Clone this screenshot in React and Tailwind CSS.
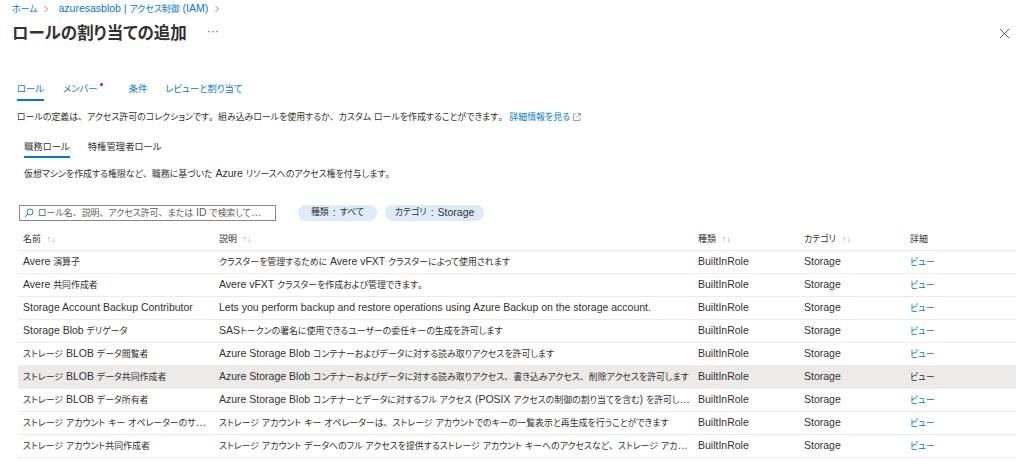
import React from "react";

const rows = [
  { name: "Avere 演算子", desc: "クラスターを管理するために Avere vFXT クラスターによって使用されます" },
  { name: "Avere 共同作成者", desc: "Avere vFXT クラスターを作成および管理できます。" },
  { name: "Storage Account Backup Contributor", desc: "Lets you perform backup and restore operations using Azure Backup on the storage account." },
  { name: "Storage Blob デリゲータ", desc: "SASトークンの署名に使用できるユーザーの委任キーの生成を許可します" },
  { name: "ストレージ BLOB データ閲覧者", desc: "Azure Storage Blob コンテナーおよびデータに対する読み取りアクセスを許可します" },
  { name: "ストレージ BLOB データ共同作成者", desc: "Azure Storage Blob コンテナーおよびデータに対する読み取りアクセス、書き込みアクセス、削除アクセスを許可します", selected: true },
  { name: "ストレージ BLOB データ所有者", desc: "Azure Storage Blob コンテナーとデータに対するフル アクセス (POSIX アクセスの制御の割り当てを含む) を許可します。" },
  { name: "ストレージ アカウント キー オペレーターのサービス ロール", desc: "ストレージ アカウント キー オペレーターは、ストレージ アカウントでのキーの一覧表示と再生成を行うことができます" },
  { name: "ストレージ アカウント共同作成者", desc: "ストレージ アカウント データへのフル アクセスを提供するストレージ アカウント キーへのアクセスなど、ストレージ アカウントを管理できます。" },
];

// japanese runs are set a bit smaller and proportional so they keep the narrow look
// of the screenshot; 、 and 。 keep their full width
function J({ children }) {
  const parts = String(children).split(/([\u3000-\u30ff\u3400-\u9fff\uff00-\uffef]+)/);
  return parts.map((p, i) => {
    if (i % 2 === 0) return p;
    return p.split(/([、。])/).map((q, k) =>
      k % 2 === 1 ? (
        <span key={i + "-" + k} className="text-[0.85em]">{q}</span>
      ) : q ? (
        <span key={i + "-" + k} className="text-[0.85em] [font-feature-settings:'palt']">{q}</span>
      ) : null
    );
  });
}

function SortArrows() {
  return <span className="ml-[6px] text-[9px] text-[#a19f9d]">↑↓</span>;
}

function Chevron() {
  return (
    <svg width="6" height="8" viewBox="0 0 6 8" className="mx-[6px]">
      <path d="M1.5 1L4.5 4L1.5 7" fill="none" stroke="#8a8886" strokeWidth="0.9" />
    </svg>
  );
}

function App() {
  const cols = "grid grid-cols-[196px_484px_106px_106px_1fr]";
  return (
    <div className="w-[1024px] h-[461px] overflow-hidden bg-white text-[#323130] [font-family:'Liberation_Sans','Noto_Sans_CJK_JP',sans-serif] text-[10.5px]">
      <div className="h-[18px] pl-[12px] flex items-center text-[#0078d4]">
        <span><J>ホーム</J></span>
        <Chevron />
        <span className="ml-[3px]"><J>azuresasblob | アクセス制御 (IAM)</J></span>
        <Chevron />
      </div>
      <div className="h-[30px] pl-[12px] pr-[14px] flex items-center">
        <h1 className="text-[16.5px] font-semibold [font-feature-settings:'palt']">ロールの割り当ての追加</h1>
        <span className="ml-[20px] text-[12px] text-[#605e5c] -mt-[4px]">···</span>
        <svg className="ml-auto" width="11" height="11" viewBox="0 0 11 11">
          <path d="M1 1L10 10M10 1L1 10" stroke="#605e5c" strokeWidth="1" />
        </svg>
      </div>

      <div className="mt-[30px] pl-[17px] flex h-[23px] text-[#0078d4] text-[11px]">
        <div className="relative flex items-center">
          <J>ロール</J>
          <span className="absolute left-0 right-0 bottom-0 h-[2px] bg-[#0078d4]" />
        </div>
        <div className="relative flex items-center ml-[19px]">
          <J>メンバー</J>
          <span className="absolute -right-[5px] top-[5px] w-[3px] h-[3px] rounded-full bg-[#e81123]" />
        </div>
        <div className="flex items-center ml-[31px]"><J>条件</J></div>
        <div className="flex items-center ml-[18px]"><J>レビューと割り当て</J></div>
      </div>

      <div className="mt-[8px] pl-[17px] h-[16px] flex items-center">
        <span>
          <J>ロールの定義は、アクセス許可のコレクションです。組み込みロールを使用するか、カスタム ロールを作成することができます。</J>
        </span>
        <span className="ml-[2px] text-[#0078d4]"><J>詳細情報を見る</J></span>
        <svg className="ml-[3px]" width="8" height="8" viewBox="0 0 8 8">
          <path d="M3 1H0.5V7.5H7V5M4.5 0.5H7.5V3.5M7.5 0.5L3.5 4.5" fill="none" stroke="#8a8886" strokeWidth="0.8" />
        </svg>
      </div>

      <div className="mt-[11px] pl-[24px] flex gap-[18px] h-[22px] text-[11px]">
        <div className="relative flex items-center">
          <J>職務ロール</J>
          <span className="absolute left-0 right-0 bottom-0 h-[2px] bg-[#0078d4]" />
        </div>
        <div className="flex items-center"><J>特権管理者ロール</J></div>
      </div>

      <div className="mt-[8px] pl-[24px] h-[16px] flex items-center">
        <span><J>仮想マシンを作成する権限など、職務に基づいた Azure リソースへのアクセス権を付与します。</J></span>
      </div>

      <div className="mt-[23px] pl-[19px] flex items-center h-[16px]">
        <div className="w-[257px] h-[16px] border border-[#8a8886] flex items-center px-[4px] text-[#605e5c]">
          <svg width="10" height="10" viewBox="0 0 10 10" className="mr-[4px] shrink-0">
            <circle cx="6" cy="4" r="3" fill="none" stroke="#0078d4" strokeWidth="0.9" />
            <path d="M3.8 6.2L1 9" stroke="#0078d4" strokeWidth="0.9" />
          </svg>
          <span className="truncate"><J>ロール名、説明、アクセス許可、または ID で検索して…</J></span>
        </div>
        <div className="ml-[22px] h-[16px] w-[79px] justify-center rounded-full bg-[#deecf9] flex items-center">
          <J>種類</J>
          <span className="mx-[4px]">:</span>
          <J>すべて</J>
        </div>
        <div className="ml-[8px] h-[16px] w-[99px] justify-center rounded-full bg-[#deecf9] flex items-center">
          <J>カテゴリ</J>
          <span className="mx-[4px]">:</span>
          Storage
        </div>
      </div>

      <div className="mt-[6px] mx-[18px] w-[998px]">
        <div className={`${cols} h-[24px] items-center border-b border-[#edebe9]`}>
          <div className="pl-[5px]"><J>名前</J><SortArrows /></div>
          <div className="pl-[5px]"><J>説明</J><SortArrows /></div>
          <div><J>種類</J><SortArrows /></div>
          <div><J>カテゴリ</J><SortArrows /></div>
          <div><J>詳細</J></div>
        </div>
        {rows.map((r) => (
          <div
            key={r.name}
            className={`${cols} h-[23px] items-center border-b border-[#edebe9] ${r.selected ? "bg-[#edebe9]" : ""}`}
          >
            <div className="pl-[5px] pr-[4px] truncate"><J>{r.name}</J></div>
            <div className="pl-[5px] pr-[6px] truncate"><J>{r.desc}</J></div>
            <div>BuiltInRole</div>
            <div>Storage</div>
            <div className={r.selected ? "" : "text-[#0078d4]"}><J>ビュー</J></div>
          </div>
        ))}
      </div>
    </div>
  );
}

export default App;
